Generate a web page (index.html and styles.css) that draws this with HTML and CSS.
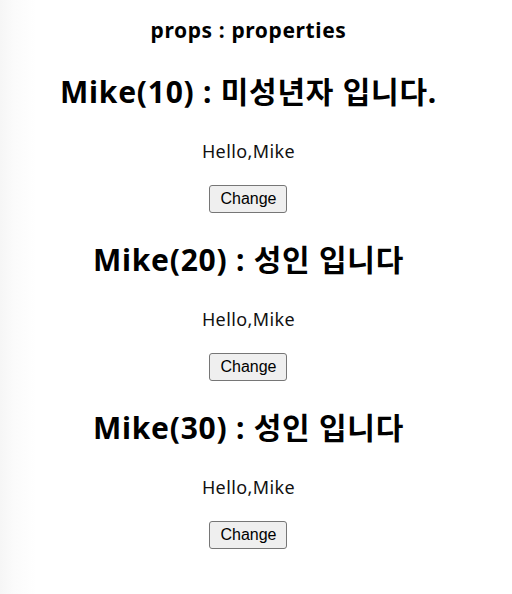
FILE: index.html
```html
<!DOCTYPE html>
<html lang="ko">
<head>
<meta charset="utf-8">
<link rel="stylesheet" href="styles.css">
</head>
<body>
<div class="page">
  <h3 class="title">props : properties</h3>
  <section class="block">
    <h1 class="heading">Mike(10) : 미성년자 입니다.</h1>
    <p class="hello">Hello,Mike</p>
    <button class="btn">Change</button>
  </section>
  <section class="block">
    <h1 class="heading">Mike(20) : 성인 입니다</h1>
    <p class="hello">Hello,Mike</p>
    <button class="btn">Change</button>
  </section>
  <section class="block">
    <h1 class="heading">Mike(30) : 성인 입니다</h1>
    <p class="hello">Hello,Mike</p>
    <button class="btn">Change</button>
  </section>
</div>
</body>
</html>
```

FILE: styles.css
```css
html, body {
  margin: 0;
  padding: 0;
}
body {
  width: 512px;
  height: 594px;
  background: linear-gradient(to right, #f6f6f6 0px, #fbfbfb 14px, #ffffff 36px);
  font-family: "Noto Sans", "Noto Sans CJK KR", sans-serif;
  color: #000;
}
.page {
  width: 497px;
  display: flex;
  flex-direction: column;
  align-items: center;
  padding-top: 15px;
}
.title {
  margin: 0;
  font-size: 21px;
  line-height: 30px;
  letter-spacing: 0.6px;
  font-weight: 700;
}
.block {
  display: flex;
  flex-direction: column;
  align-items: center;
  margin-top: 27px;
}
.heading {
  margin: 0;
  font-size: 30px;
  line-height: 40px;
  letter-spacing: 0.75px;
  font-weight: 700;
}
.hello {
  margin: 27px 0 0;
  font-size: 18px;
  line-height: 24px;
  letter-spacing: 0.4px;
  color: #111;
}
.btn {
  margin-top: 22px;
  height: 28px;
  width: 78px;
  padding: 0;
  font-family: "Liberation Sans", Arial, sans-serif;
  font-size: 16px;
  color: #000;
  background: #efefef;
  border: 1px solid #767676;
  border-radius: 3px;
}
```
